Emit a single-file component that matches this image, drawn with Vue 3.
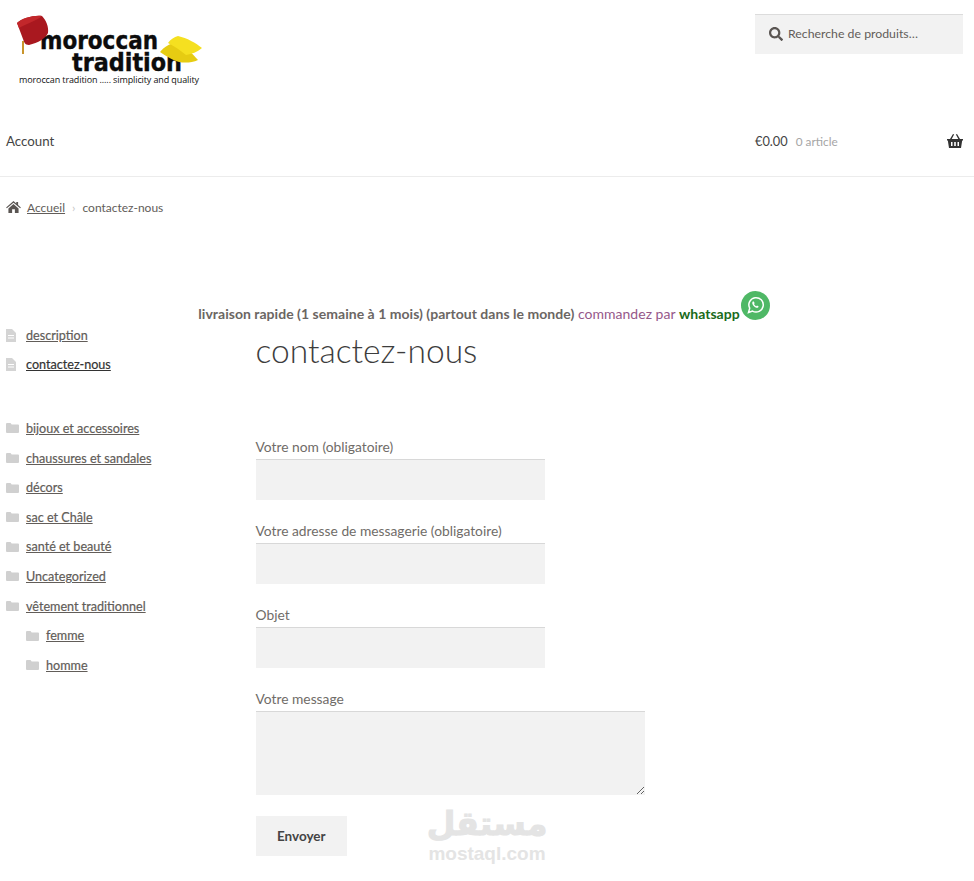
<script setup>
const pages = [
  { name: 'description', active: false },
  { name: 'contactez-nous', active: true },
]
const cats = [
  { name: 'bijoux et accessoires' },
  { name: 'chaussures et sandales' },
  { name: 'décors' },
  { name: 'sac et Châle' },
  { name: 'santé et beauté' },
  { name: 'Uncategorized' },
  { name: 'vêtement traditionnel' },
  { name: 'femme', sub: true },
  { name: 'homme', sub: true },
]
const fields = ['Votre nom (obligatoire)', 'Votre adresse de messagerie (obligatoire)', 'Objet']
</script>

<template>
  <div class="page">
    <header class="head">
      <div class="top">
        <svg class="logo" width="200" height="76" viewBox="0 0 200 76">
          <text x="24" y="35" class="lg" textLength="118" lengthAdjust="spacingAndGlyphs">moroccan</text>
          <text x="56" y="57" class="lg" textLength="110" lengthAdjust="spacingAndGlyphs">tradition</text>
          <text x="3" y="69" class="lt" textLength="180">moroccan tradition ..... simplicity and quality</text>
          <path d="M1 9 C6 4 18 1 26 2 C30 6 33 13 32 19 C30 24 22 29 13 31 C9 31 8 28 7 25 C5 20 3 14 1 9Z" fill="#a9181f"/>
          <path d="M1 9 C6 4 18 1 26 2 C22 6 10 10 3 14Z" fill="#c2272b"/>
          <path d="M7 27 L7 40" stroke="#c9952c" stroke-width="2"/>
          <path d="M144 38 C148 33 154 29 160 29 C168 32 176 39 182 46 C176 49 168 49 163 48 C156 46 150 42 144 38Z" fill="#e6cc12"/>
          <path d="M152 29 C155 25 158 23 162 22 C171 24 180 29 186 34 C181 38 176 40 170 41 C164 36 158 32 152 29Z" fill="#f5e020"/>
        </svg>
        <label class="search">
          <svg width="14" height="14" viewBox="0 0 512 512"><path fill="#5a5552" d="M505 442.700L405.300 343c-4.500-4.500-10.600-7-17-7H372c27.600-35.300 44-79.700 44-128C416 93.100 322.900 0 208 0S0 93.100 0 208s93.100 208 208 208c48.300 0 92.700-16.400 128-44v16.300c0 6.400 2.500 12.500 7 17l99.700 99.700c9.400 9.400 24.600 9.400 33.900 0l28.300-28.300c9.400-9.400 9.400-24.600.1-34zM208 336c-70.700 0-128-57.200-128-128 0-70.700 57.200-128 128-128 70.700 0 128 57.200 128 128 0 70.700-57.200 128-128 128z"/></svg>
          <span>Recherche de produits…</span>
        </label>
      </div>
      <nav class="nav">
        <span class="account">Account</span>
        <div class="cart">
          <span class="price">€0.00</span>
          <span class="count">0 article</span>
          <svg class="basket" width="16" height="14" viewBox="0 0 16 14"><path fill="#333" d="M0 5h16v1.500h-.8L14 14H2L.8 6.500H0zM3 5l3-5 1.100.6L4.700 5zm10 0l-3-5-1.100.6L11.300 5z"/><path fill="#fff" d="M4 8h1.500v4H4zm3.200 0h1.600v4H7.200zm3.300 0H12v4h-1.500z"/></svg>
        </div>
      </nav>
    </header>

    <div class="crumbs">
      <svg width="15" height="12" viewBox="0 0 16 13"><path fill="#5a5552" d="M8 0l3 2.600V1h2v3.300L16 7l-.8.800L8 1.800.8 7.800 0 7zM2.500 8L8 3.300 13.500 8v5H9.500V9h-3v4h-4z"/></svg>
      <a class="link">Accueil</a>
      <span class="sep">›</span>
      <span>contactez-nous</span>
    </div>

    <p class="notice">
      <b>livraison rapide (1 semaine à 1 mois) (partout dans le monde)</b>
      <span class="purple"> commandez par </span>
      <b class="green">whatsapp</b>
      <svg class="wa" width="29" height="29" viewBox="0 0 29 29">
        <circle cx="14.500" cy="14.500" r="14.500" fill="#4fb866"/>
        <path d="M7.500 21.500l1.200-4.300a7.200 7.200 0 1 1 2.800 2.900z" fill="none" stroke="#fff" stroke-width="1.500"/>
        <path d="M11.800 10.500c-1 1-.6 2.800.9 4.500s3.200 2.300 4.400 1.500l.6-1-1.700-1-.7.700c-1-.4-1.800-1.300-2.300-2.300l.7-.7-.9-1.800z" fill="#fff"/>
      </svg>
    </p>

    <div class="main">
      <aside class="side">
        <ul class="list pages">
          <li v-for="p in pages" :key="p.name" :class="{ active: p.active }">
            <svg class="ic" width="10" height="13" viewBox="0 0 10 13"><path fill="#d4d4d4" d="M0 0h6l4 4v9H0z"/><path fill="#fff" d="M2 6h6v1H2zm0 2.500h6v1H2z"/></svg>
            <a class="link">{{ p.name }}</a>
          </li>
        </ul>
        <ul class="list">
          <li v-for="c in cats" :key="c.name" :class="{ sub: c.sub }">
            <svg class="ic folder" width="13" height="10" viewBox="0 0 13 10"><path fill="#d0d0d0" d="M0 1a1 1 0 0 1 1-1h3.500l1.200 1.500H12a1 1 0 0 1 1 1V9a1 1 0 0 1-1 1H1a1 1 0 0 1-1-1z"/></svg>
            <a class="link">{{ c.name }}</a>
          </li>
        </ul>
      </aside>

      <main class="content">
        <h1>contactez-nous</h1>
        <form class="form" @submit.prevent>
          <label v-for="f in fields" :key="f" class="field">
            <span>{{ f }}</span>
            <input type="text" />
          </label>
          <label class="field">
            <span>Votre message</span>
            <textarea></textarea>
          </label>
          <button type="submit">Envoyer</button>
        </form>
      </main>
    </div>

    <div class="mark">
      <span class="ar" dir="rtl" lang="ar">مستقل</span>
      <span class="en">mostaql.com</span>
    </div>
  </div>
</template>

<style scoped>
.page {
  position: relative;
  width: 974px;
  height: 881px;
  overflow: hidden;
  background: #fff;
  color: #5f5a56;
  font-family: Lato, "Open Sans", sans-serif;
  font-size: 14px;
}
.head {
  height: 177px;
  box-sizing: border-box;
  border-bottom: 1px solid #ececec;
  padding: 14px 11px 0 6px;
}
.top {
  display: flex;
  justify-content: space-between;
  align-items: flex-start;
  height: 105px;
}
.logo { margin-left: 10px; }
.lg {
  font: 700 24px/1 "DejaVu Sans", sans-serif;
  fill: #0c0c0c;
  stroke: #0c0c0c;
  stroke-width: 0.4px;
}
.lt {
  font: 9px "Open Sans", sans-serif;
  fill: #111;
}
.search {
  width: 208px;
  height: 40px;
  box-sizing: border-box;
  background: #f2f2f2;
  border-top: 1px solid #dcdcdc;
  display: flex;
  align-items: center;
  gap: 5px;
  padding-left: 14px;
  padding-bottom: 2px;
  font-size: 12.300px;
  color: #625d59;
}
.nav {
  display: flex;
  justify-content: space-between;
  align-items: center;
  height: 44px;
}
.account { color: #444; font-size: 13.300px; }
.cart {
  width: 208px;
  display: flex;
  align-items: center;
  color: #444;
  font-size: 12.800px;
}
.count {
  margin-left: 8px;
  color: #a5a5a5;
  font-size: 11.800px;
}
.basket { margin-left: auto; }
.crumbs {
  display: flex;
  align-items: center;
  gap: 6px;
  height: 30px;
  margin: 15px 0 0 6px;
  font-size: 12px;
  color: #625d59;
}
.link { color: #625d59; text-decoration: underline; }
.sep { color: #c5c5c5; margin: 0 1px; }
.notice {
  margin: 0;
  height: 92px;
  padding: 69px 6px 0 0;
  box-sizing: border-box;
  text-align: center;
  font-size: 14px;
  white-space: nowrap;
  letter-spacing: 0.030px;
  color: #6b6663;
}
.notice b { font-weight: 700; }
.purple { color: #96588a; }
.green { color: #1a6a1a; }
.wa { vertical-align: -1px; margin-left: 1px; }
.main { display: flex; }
.side {
  width: 255.500px;
  flex: none;
  padding: 6.500px 0 0 6px;
  box-sizing: border-box;
}
.list {
  list-style: none;
  margin: 0 0 34px;
  padding: 0;
  font-size: 12.600px;
  font-weight: 400;
  -webkit-text-stroke: 0.2px currentColor;
}
.list li {
  height: 29.600px;
  display: flex;
  align-items: center;
  gap: 7px;
}
.pages li { gap: 10px; }
.list .sub { padding-left: 20px; }
.active .link { color: #333; }
.content { padding-top: 14px; }
h1 {
  margin: 0;
  height: 72px;
  font-size: 33.600px;
  line-height: 44px;
  font-weight: 300;
  color: #3d3d3d;
  font-family: Lato, sans-serif;
}
.form {
  padding-top: 36px;
  display: flex;
  flex-direction: column;
  align-items: flex-start;
}
.field {
  display: flex;
  flex-direction: column;
  margin-bottom: 20px;
  font-size: 13.800px;
  color: #706c68;
}
.field span {
  line-height: 21px;
  padding-bottom: 2px;
}
input, textarea {
  box-sizing: border-box;
  background: #f2f2f2;
  border: 0;
  border-top: 1px solid #d8d8d8;
  display: block;
  padding: 0;
  margin: 0;
}
input { width: 289.500px; height: 41px; }
textarea { width: 389.500px; height: 84px; margin-bottom: 1px; }
button {
  width: 91.500px;
  height: 40px;
  border: 0;
  background: #f2f2f2;
  color: #444;
  font: 700 13.500px Lato, sans-serif;
  padding-bottom: 2px;
}
.mark {
  position: absolute;
  left: 427px;
  top: 804px;
  width: 120px;
  display: flex;
  flex-direction: column;
  align-items: center;
  color: #e4e4e4;
}
.ar {
  font: 700 33px/40px "DejaVu Sans", sans-serif;
  -webkit-text-stroke: 1px #e4e4e4;
}
.en {
  font: 700 19px/20px "Liberation Sans", sans-serif;
}
</style>
